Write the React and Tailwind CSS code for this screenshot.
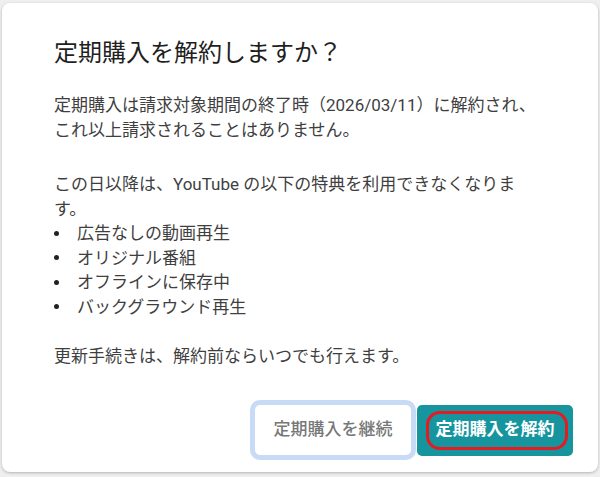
import React from 'react';

const perks = ['広告なしの動画再生', 'オリジナル番組', 'オフラインに保存中', 'バックグラウンド再生'];

const font = { fontFamily: 'Roboto, "Noto Sans CJK JP", sans-serif' };

export default function App() {
  return (
    <div className="h-[477px] w-[600px] bg-[#efefef] px-[2px] pt-[3px] pb-[5px]" style={font}>
      <div className="flex h-full flex-col rounded-[8px] bg-white pl-[52px] pr-[25px] pt-[34px] pb-[12px] shadow-[0_1px_3px_rgba(0,0,0,0.25)]">
        <h1 className="text-[24px] leading-[32px] font-normal text-[#1f1f1f]">定期購入を解約しますか？</h1>

        <div className="mt-[24px] text-[17px] leading-[24.5px] text-[#3f3f3f]">
          <p>
            定期購入は請求対象期間の終了時（2026/03/11）に解約され、
            <br />
            これ以上請求されることはありません。
          </p>
          <p className="mt-[30px]">
            この日以降は、YouTube の以下の特典を利用できなくなりま
            <br />
            す。
          </p>
          <ul>
            {perks.map((perk) => (
              <li key={perk} className="flex items-center">
                <span className="w-[23px] shrink-0">
                  <span className="block h-[5px] w-[5px] rounded-full bg-[#222]" />
                </span>
                <span>{perk}</span>
              </li>
            ))}
          </ul>
          <p className="mt-[25px]">更新手続きは、解約前ならいつでも行えます。</p>
        </div>

        <div className="mt-auto flex items-center justify-end gap-[1px]">
          <button className="h-[60px] w-[166px] rounded-[10px] border-[5px] border-[#c8dbf6] bg-white text-[17px] font-medium text-[#777777]">
            定期購入を継続
          </button>
          <button className="relative h-[51px] w-[156px] rounded-[5px] bg-[#16959f] text-[17px] font-bold text-white">
            定期購入を解約
            <span className="absolute top-[6px] right-[5px] bottom-[6px] left-[9px] rounded-[14px] border-[3px] border-[#e31b23]" />
          </button>
        </div>
      </div>
    </div>
  );
}
